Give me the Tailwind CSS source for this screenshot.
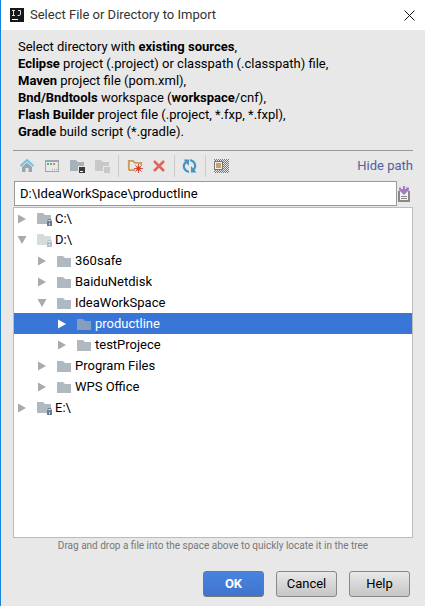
<!DOCTYPE html>
<html lang="en">
<head>
<meta charset="utf-8">
<title>Select File or Directory to Import</title>
<script src="https://cdn.jsdelivr.net/npm/@tailwindcss/browser@4"></script>
</head>
<body class="flex min-h-screen flex-col border-l border-[#1883d7] bg-[#e8e8e8] font-['Roboto','Noto_Sans',sans-serif] text-[13px] text-black">
<svg class="hidden">
  <symbol id="folder" viewBox="0 0 16 16"><path d="M1 3h6l2 2h6v9H1z" fill="currentColor"/></symbol>
  <symbol id="drive" viewBox="0 0 16 16"><path d="M1 2h6l2 2h6v4h-2l-2 2v3H1z" fill="currentColor"/><path d="M11 10h5v5h-5z" fill="#6b7f8e"/><path d="M12 10V8.500h3V10" fill="none" stroke="#6b7f8e"/><path d="M13 12h1v2h-1z" fill="#c5ced4"/></symbol>
  <symbol id="closed" viewBox="0 0 8 10"><path d="M0 0.500 8 5 0 9.500z" fill="currentColor"/></symbol>
  <symbol id="open" viewBox="0 0 10 8"><path d="M0.500 0h9L5 8z" fill="currentColor"/></symbol>
</svg>

<header class="flex h-[30px] items-center gap-1.5 bg-white pr-2.5 pl-[9px]">
  <svg class="size-3.5" viewBox="0 0 14 14"><path d="M0 0h14v14H0z" fill="#171717"/><path d="M2 2.500h3M3.500 2.500v5M2 7.500h3M8 2.500h2.500V6q0 1.500-1.500 1.500H7.500" fill="none" stroke="#ddd"/><path d="M2 11h6v1H2z" fill="#fff"/></svg>
  <h1 class="flex-1 text-[#333]">Select File or Directory to Import</h1>
  <button aria-label="Close"><svg class="size-[11px]" viewBox="0 0 11 11"><path d="m.5.5 10 10M10.500.5l-10 10" stroke="#111" fill="none"/></svg></button>
</header>

<main class="flex flex-1 flex-col px-3">
  <p class="border-b border-[#999] px-[5px] pt-2 pb-2.5 leading-[17px] whitespace-nowrap">
    Select directory with <b>existing sources</b>,<br>
    <b>Eclipse</b> project (.project) or classpath (.classpath) file,<br>
    <b>Maven</b> project file (pom.xml),<br>
    <b>Bnd/Bndtools</b> workspace (<b>workspace</b>/cnf),<br>
    <b>Flash Builder</b> project file (.project, *.fxp, *.fxpl),<br>
    <b>Gradle</b> build script (*.gradle).
  </p>

  <div class="flex h-[30px] items-center pl-1.5">
    <div class="flex gap-[9px]">
      <button aria-label="Home"><svg class="size-4" viewBox="0 0 16 16"><path d="M3 9 8 4.500 13 9v5H9.500v-4h-3v4H3z" fill="#99a7b0"/><path d="m1.500 8 6.500-6 6.500 6" fill="none" stroke="#6cc3e2" stroke-width="2"/></svg></button>
      <button aria-label="Project directory"><svg class="size-4" viewBox="0 0 16 16"><path d="M1 2h14v12H1z" fill="#9aa7b0"/><path d="M2 4h12v9H2z" fill="#e8e8e8"/><path d="M3 5h2v2H3z" fill="#64b93f"/><path d="M6 5h2v2H6z" fill="#40b6e0"/><path d="M9 5h2v2H9z" fill="#f27c41"/><path d="M8 11h1v1H8zM10 11h1v1h-1zM12 11h1v1h-1z" fill="#9aa7b0"/></svg></button>
      <button aria-label="Module directory"><svg class="size-4" viewBox="0 0 16 16"><path d="M1 2h6l2 2h6v4H9v5H1z" fill="#a5b2ba"/><path d="M10 9h6v6h-6z" fill="#3c3c3c"/><path d="M11 13h3v1h-3z" fill="#fff"/></svg></button>
      <button aria-label="Content root" disabled><svg class="size-4" viewBox="0 0 16 16"><path d="M1 2h6l2 2h6v4H9v5H1zM10 9h6v6h-6z" fill="#c8c8c8"/></svg></button>
    </div>
    <span class="mx-2 h-[22px] w-px bg-[#ccc]"></span>
    <div class="flex gap-2">
      <button aria-label="New folder"><svg class="size-4" viewBox="0 0 16 16"><path d="M1.800 12.200V2.800H6l2 2h6.200V7M1.800 12.200H8" fill="none" stroke="#c99c5c" stroke-width="1.800"/><path d="M11.500 6v9M7 10.500h9M8.300 7.300l6.400 6.400M14.700 7.300l-6.400 6.400" stroke="#d0544a" fill="none"/><circle cx="11.500" cy="10.500" r="2.200" fill="#d0402f"/></svg></button>
      <button aria-label="Delete"><svg class="size-4" viewBox="0 0 16 16"><path d="m3 3 10 10M13 3 3 13" stroke="#df6558" stroke-width="2.500" fill="none"/></svg></button>
    </div>
    <span class="mx-[7px] h-[22px] w-px bg-[#ccc]"></span>
    <button aria-label="Refresh"><svg class="size-4" viewBox="0 0 16 16"><path d="M7 14C.5 12 .5 6 5 3.500M8 2c6.500 2 6.500 8 2 10.500" fill="none" stroke="#4a93c0" stroke-width="2.200"/><path d="M1.500 1.500H7V8zM14.500 14.500H9V8z" fill="#4a93c0"/></svg></button>
    <span class="mx-[7px] h-[22px] w-px bg-[#ccc]"></span>
    <button aria-label="Show hidden files"><svg class="size-4" viewBox="0 0 16 16"><defs><pattern id="dots" width="2" height="2" patternUnits="userSpaceOnUse"><path d="M0 0h1v1H0zM1 1h1v1H1z" fill="#777"/></pattern></defs><path d="M1 1h15v14H1z" fill="url(#dots)"/><path d="M1 3h9v9H1z" fill="#777"/><path d="M2 4h7v7H2z" fill="#eee"/><path d="M3 5h5v5H3z" fill="#d0a060"/></svg></button>
    <a href="#" class="ml-auto text-[#5060a0]">Hide path</a>
  </div>

  <div class="flex items-center">
    <input aria-label="Path" value="D:\IdeaWorkSpace\productline" class="ml-px h-[25px] min-w-0 flex-1 border border-[#999] bg-white px-[5px] outline-none">
    <button aria-label="Recent paths"><svg class="size-4" viewBox="2 1 16 16"><path d="M3 6h2v8h8V6h2v11H3z" fill="#888"/><path d="M5 6h8v9H5z" fill="#f2f2f2"/><path d="M6 11h6v1H6zM6 13h6v1H6z" fill="#888"/><path d="M8 1h2v3h1V2.500h3V5L9 10 4 5V2.500h2V4h2z" fill="#a47cc0"/></svg></button>
  </div>

  <ul role="tree" class="mt-px flex-1 border border-[#bbb] bg-white leading-[21px]">
    <li role="treeitem" class="flex h-[21px] items-center pl-1"><svg class="mr-2.5 h-2.5 w-2 text-[#aaa]"><use href="#closed"/></svg><svg class="mr-[3px] size-4 text-[#afb9bf]"><use href="#drive"/></svg>C:\</li>
    <li role="treeitem" aria-expanded="true">
      <div class="flex h-[21px] items-center pl-[3px]"><svg class="mr-[9px] h-2 w-2.5 text-[#aaa]"><use href="#open"/></svg><svg class="mr-[3px] size-4 text-[#afb9bf] opacity-50"><use href="#drive"/></svg>D:\</div>
      <ul role="group">
        <li role="treeitem" class="flex h-[21px] items-center pl-6"><svg class="mr-2.5 h-2.5 w-2 text-[#aaa]"><use href="#closed"/></svg><svg class="mr-[3px] size-4 text-[#afb9bf]"><use href="#folder"/></svg>360safe</li>
        <li role="treeitem" class="flex h-[21px] items-center pl-6"><svg class="mr-2.5 h-2.5 w-2 text-[#aaa]"><use href="#closed"/></svg><svg class="mr-[3px] size-4 text-[#afb9bf]"><use href="#folder"/></svg>BaiduNetdisk</li>
        <li role="treeitem" aria-expanded="true">
          <div class="flex h-[21px] items-center pl-[23px]"><svg class="mr-[9px] h-2 w-2.5 text-[#aaa]"><use href="#open"/></svg><svg class="mr-[3px] size-4 text-[#afb9bf]"><use href="#folder"/></svg>IdeaWorkSpace</div>
          <ul role="group">
            <li role="treeitem" aria-selected="true" class="flex h-[21px] items-center bg-[#3875d7] pl-11 text-white"><svg class="mr-2.5 h-2.5 w-2"><use href="#closed"/></svg><svg class="mr-[3px] size-4 text-[#869dbd]"><use href="#folder"/></svg>productline</li>
            <li role="treeitem" class="flex h-[21px] items-center pl-11"><svg class="mr-2.5 h-2.5 w-2 text-[#aaa]"><use href="#closed"/></svg><svg class="mr-[3px] size-4 text-[#afb9bf]"><use href="#folder"/></svg>testProjece</li>
          </ul>
        </li>
        <li role="treeitem" class="flex h-[21px] items-center pl-6"><svg class="mr-2.5 h-2.5 w-2 text-[#aaa]"><use href="#closed"/></svg><svg class="mr-[3px] size-4 text-[#afb9bf]"><use href="#folder"/></svg>Program Files</li>
        <li role="treeitem" class="flex h-[21px] items-center pl-6"><svg class="mr-2.5 h-2.5 w-2 text-[#aaa]"><use href="#closed"/></svg><svg class="mr-[3px] size-4 text-[#afb9bf]"><use href="#folder"/></svg>WPS Office</li>
      </ul>
    </li>
    <li role="treeitem" class="flex h-[21px] items-center pl-1"><svg class="mr-2.5 h-2.5 w-2 text-[#aaa]"><use href="#closed"/></svg><svg class="mr-[3px] size-4 text-[#afb9bf]"><use href="#drive"/></svg>E:\</li>
  </ul>

  <p class="text-center text-[10px] leading-4 text-[#777]">Drag and drop a file into the space above to quickly locate it in the tree</p>

  <footer class="mt-[17px] mb-[9px] flex justify-end gap-3 pr-[3px]">
    <button class="h-[26px] w-[61px] rounded-[3px] border border-[#777] bg-linear-to-b from-[#4784e0] to-[#4074cc] font-bold text-white">OK</button>
    <button class="h-[26px] w-[61px] rounded-[3px] border border-[#888] bg-linear-to-b from-[#e8e8e8] to-[#c6c6c6]">Cancel</button>
    <button class="h-[26px] w-[61px] rounded-[3px] border border-[#888] bg-linear-to-b from-[#e8e8e8] to-[#c6c6c6]">Help</button>
  </footer>
</main>
</body>
</html>
